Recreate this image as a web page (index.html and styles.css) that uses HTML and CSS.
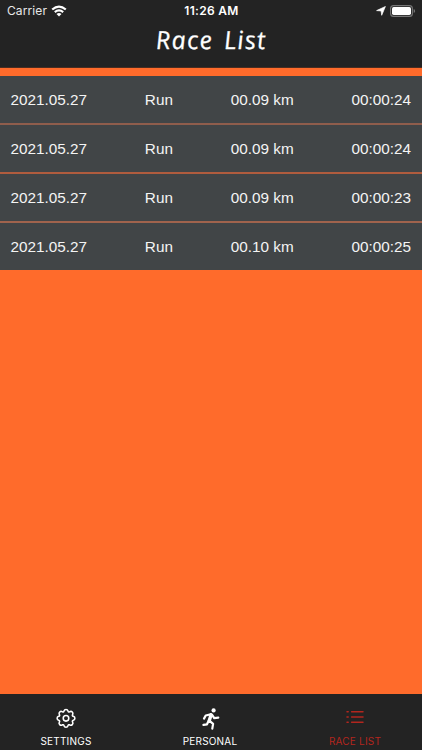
FILE: index.html
```html
<!DOCTYPE html>
<html lang="en">
<head>
<meta charset="utf-8">
<title>Race List</title>
<link rel="stylesheet" href="styles.css">
</head>
<body>
<div class="app">
  <header class="header">
    <div class="status">
      <div class="status-left"><span>Carrier</span>
        <svg class="wifi" width="16" height="12" viewBox="0 0 16 12" fill="none" stroke="#fff" stroke-width="2.2"><path d="M1.2 4.5Q8-1.4 14.8 4.5M3.8 7.1Q8 3.5 12.2 7.1"/><path d="M5.5 8.9Q8 7 10.5 8.9L8 11.4Z" fill="#fff" stroke="none"/></svg>
      </div>
      <div class="clock">11:26 AM</div>
      <div class="status-right">
        <svg width="10" height="10" viewBox="0 0 10 10" fill="#fff" stroke="#fff" stroke-width=".7" stroke-linejoin="round"><path d="M9.4.5 5.7 9.3 5.1 4.9.6 4.6Z"/></svg>
        <svg class="battery" width="26" height="12" viewBox="0 0 26 12"><rect x=".6" y=".6" width="21.8" height="10.8" rx="3" fill="none" stroke="#777" stroke-width="1.1"/><rect x="2" y="2" width="19" height="8" rx="1.7" fill="#fff"/><path d="M23.7 4v4q1.4-.7 1.4-2t-1.4-2" fill="#777"/></svg>
      </div>
    </div>
    <h1 class="title">Race List</h1>
  </header>
  <main class="races">
    <div class="race"><span>2021.05.27</span><span>Run</span><span>00.09 km</span><span>00:00:24</span></div>
    <div class="race"><span>2021.05.27</span><span>Run</span><span>00.09 km</span><span>00:00:24</span></div>
    <div class="race"><span>2021.05.27</span><span>Run</span><span>00.09 km</span><span>00:00:23</span></div>
    <div class="race"><span>2021.05.27</span><span>Run</span><span>00.10 km</span><span>00:00:25</span></div>
  </main>
  <nav class="tabs">
    <div class="tab settings">
      <svg width="20" height="24" viewBox="-1 -2.2 18 21.6" fill="none" stroke="#fff" stroke-width="1.4"><circle cx="8" cy="8" r="2.5"/><path d="M9.796 1.343c-.527-1.79-3.065-1.79-3.592 0l-.094.319a.873.873 0 0 1-1.255.52l-.292-.16c-1.64-.892-3.433.902-2.54 2.541l.159.292a.873.873 0 0 1-.52 1.255l-.319.094c-1.79.527-1.79 3.065 0 3.592l.319.094a.873.873 0 0 1 .52 1.255l-.16.292c-.892 1.64.901 3.434 2.541 2.54l.292-.159a.873.873 0 0 1 1.255.52l.094.319c.527 1.79 3.065 1.79 3.592 0l.094-.319a.873.873 0 0 1 1.255-.52l.292.16c1.64.893 3.434-.902 2.54-2.541l-.159-.292a.873.873 0 0 1 .52-1.255l.319-.094c1.79-.527 1.79-3.065 0-3.592l-.319-.094a.873.873 0 0 1-.52-1.255l.16-.292c.893-1.64-.902-3.433-2.541-2.54l-.292.159a.873.873 0 0 1-1.255-.52Z"/></svg>
      <span>SETTINGS</span>
    </div>
    <div class="tab personal">
      <svg width="20" height="24" viewBox="-.8 0 20 24" fill="none" stroke="#fff" stroke-width="2.2" stroke-linecap="round" stroke-linejoin="round"><circle cx="12.8" cy="3.4" r="2.1" fill="#fff" stroke="none"/><path d="m10 7.2-5.1 1.3-1.7 3.1M11.3 7.8l2.1 3.3 4.1-.5M8.5 13.6l3.8 3.3-.8 4.7M7.7 14l-1.5 3.3-3.6.6"/><path d="M10.3 7.8 8.5 13.4" stroke-width="3.4"/></svg>
      <span>PERSONAL</span>
    </div>
    <div class="tab list active">
      <svg width="20" height="24" viewBox="0 0 20 24" fill="none" stroke="currentColor" stroke-width="1.5" stroke-linecap="round"><path d="M6.6 4.8h11.4M6.6 10h11.4M6.6 15.2h11.4M2 4.8h1.2M2 10h1.2M2 15.2h1.2"/></svg>
      <span>RACE LIST</span>
    </div>
  </nav>
</div>
</body>
</html>
```
FILE: styles.css
```css
* { box-sizing: border-box; }
body { margin: 0; background: #ff6b2b; color: #fff; font-family: "Liberation Sans", Arial, sans-serif; }
.app { height: 750px; display: flex; flex-direction: column; overflow: hidden; }
.header { height: 68px; background: #232323; border-bottom: 1px solid #4b2d20; }
.status { height: 22px; padding: 0 6px 0 7px; display: grid; grid-template-columns: 1fr auto 1fr; align-items: center; font: 12px/22px Inter, sans-serif; }
.status-left, .status-right { display: flex; align-items: center; }
.status-left { gap: 4px; letter-spacing: .1px; color: #e8e8e8; }
.status-right { justify-content: flex-end; gap: 4px; }
.clock { font-weight: 600; font-size: 12px; letter-spacing: .3px; }
.title { margin: 0; text-align: center; font: italic 500 25px/35px "Chalkboard SE", "Open Sans", sans-serif; letter-spacing: 1.3px; word-spacing: 3px; transform: skewX(6deg); -webkit-text-stroke: .3px #fff; }
.races { flex: 1; padding-top: 8px; }
.race { height: 49px; padding: 0 11px 0 10.5px; display: flex; justify-content: space-between; align-items: center; background: #414547; border-bottom: 2px solid #8f5d4c; font-size: 15.3px; color: #f4f4f4; }
.race:nth-child(2) { border-bottom-color: #b05c3e; }
.race:nth-child(3) { border-bottom-color: #a0634d; }
.race:last-child { height: 47px; border-bottom: 0; }
.tabs { height: 56px; display: grid; grid-template-columns: 132px 1fr 134px; background: #232323; padding-top: 13px; }
.tab { display: flex; flex-direction: column; align-items: center; font: 10px/14px Inter, sans-serif; letter-spacing: .2px; }
.tab span { margin-top: 3px; }
.active { color: #b3261e; }
```
